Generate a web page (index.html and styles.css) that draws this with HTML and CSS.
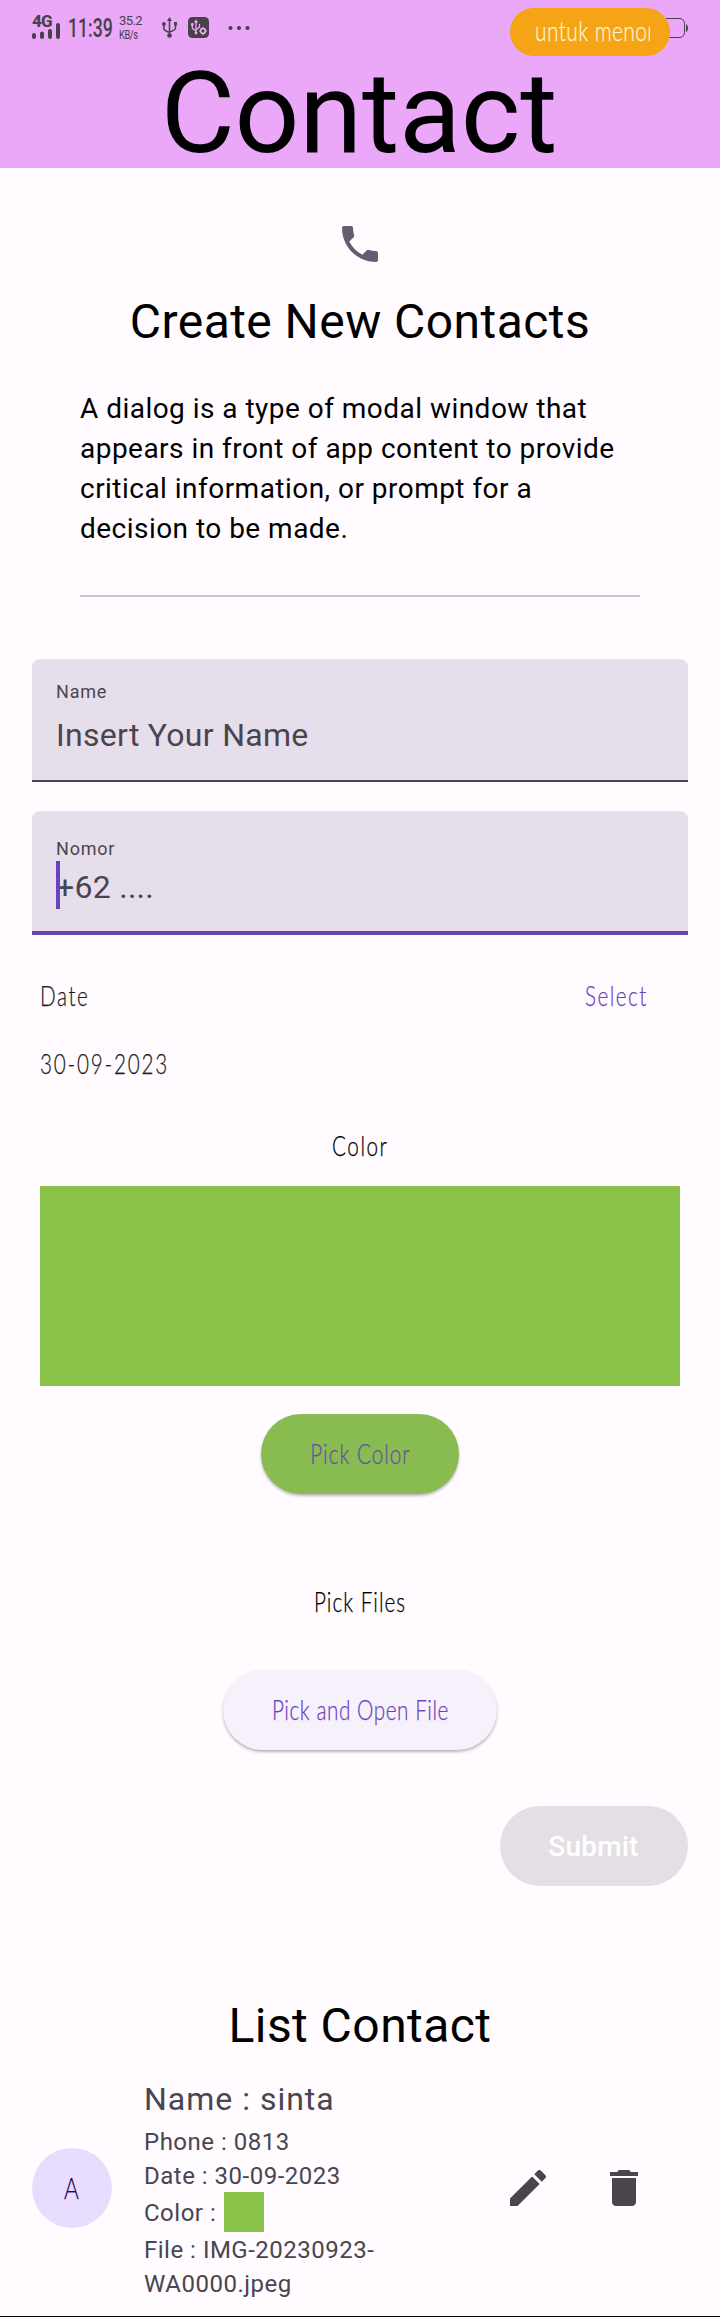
FILE: index.html
```html
<!DOCTYPE html>
<html lang="id">
<head>
<meta charset="utf-8">
<title>Contact</title>
<link rel="stylesheet" href="styles.css">
</head>
<body>
<header class="app-bar">
  <div class="status">
    <div class="signal">
      <span class="network">4G</span>
      <svg width="28" height="16" viewBox="0 0 28 16"><path d="M2 12v2M10 10.500v3.500M18 8v6M26 2v12" stroke="#48404a" stroke-width="4" stroke-linecap="round"/></svg>
    </div>
    <span class="clock"><span class="clock-text">11:39</span></span>
    <span class="speed"><span>35.2</span><span class="unit">KB/s</span></span>
    <svg class="usb" width="16" height="21" viewBox="0 0 16 21" fill="none" stroke="#48404a" stroke-width="1.500"><path d="M7.500 3v15M1.800 8v3q0 3 5.700 4.200M13.500 7v3.500q0 3-6 4.500"/><path d="M7.500 0L10 4H5zM12 5h3v3.500h-3z" fill="#48404a" stroke="none"/><circle cx="1.900" cy="7" r="1.900" fill="#48404a" stroke="none"/><circle cx="7.500" cy="18.500" r="2.300" fill="#48404a" stroke="none"/></svg>
    <svg class="debug" width="21" height="21" viewBox="0 0 21 21" fill="none" stroke="#efb4fa" stroke-width="1.200"><rect width="21" height="21" rx="4.500" fill="#48404a" stroke="none"/><path d="M8 4v12M4.300 8v2.500q0 2 3.700 3M11.500 7v3l-3 2.500"/><path d="M8 2.500L10 5.500H6z" fill="#efb4fa" stroke="none"/><circle cx="4.300" cy="7.500" r=".8" fill="#efb4fa"/><circle cx="8" cy="16" r=".8" fill="#efb4fa"/><circle cx="15" cy="14" r="2.400" stroke-width="1.500"/><path d="M15 10v1.500M15 16.500V18M11 14h1.500M17.500 14H19"/></svg>
    <svg class="dots" width="22" height="6" viewBox="0 0 22 6" fill="#48404a"><circle cx="2.500" cy="3" r="2.100"/><circle cx="11" cy="3" r="2.100"/><circle cx="19.500" cy="3" r="2.100"/></svg>
    <svg class="battery" width="40" height="20" viewBox="0 0 40 20"><rect x=".500" y=".500" width="36" height="19" rx="5" fill="none" stroke="#48404a"/><path d="M38 6q2 1 2 4t-2 4z" fill="#48404a"/></svg>
    <div class="toast"><div class="toast-clip"><span class="toast-text">untuk menon</span></div></div>
  </div>
  <h1 class="app-title">Contact</h1>
</header>
<main class="content">
  <svg class="phone" width="48" height="48" viewBox="0 0 24 24" fill="#655b73"><path d="M6.620 10.790c1.440 2.830 3.760 5.140 6.590 6.590l2.200-2.200c.270-.270.670-.360 1.020-.240 1.120.370 2.330.570 3.570.570.550 0 1 .450 1 1V20c0 .550-.450 1-1 1-9.390 0-17-7.610-17-17 0-.550.450-1 1-1h3.500c.550 0 1 .450 1 1 0 1.250.200 2.450.570 3.570.110.350.030.740-.250 1.020l-2.200 2.200z"/></svg>
  <h2 class="heading">Create New Contacts</h2>
  <p class="intro">A dialog is a type of modal window that appears in front of app content to provide critical information, or prompt for a decision to be made.</p>
  <div class="divider"></div>
  <div class="field">
    <div class="label">Name</div>
    <div class="placeholder">Insert Your Name</div>
  </div>
  <div class="field focused">
    <div class="label">Nomor</div>
    <div class="placeholder">+62 ....</div>
    <span class="caret"></span>
  </div>
  <div class="date-row"><span class="slim date-label">Date</span><span class="slim select">Select</span></div>
  <div class="date-value"><span class="slim digits">30-09-2023</span></div>
  <div class="color-label"><span class="slim centered color-text">Color</span></div>
  <div class="swatch"></div>
  <div class="button pick-color"><span class="slim centered pick-text">Pick Color</span></div>
  <div class="files-label"><span class="slim centered pick-text">Pick Files</span></div>
  <div class="button pick-file"><span class="slim centered open-text">Pick and Open File</span></div>
  <div class="button submit">Submit</div>
  <h2 class="heading list-heading">List Contact</h2>
  <section class="contact">
    <div class="avatar"><span class="slim centered initial">A</span></div>
    <div class="details">
      <div class="name">Name : sinta</div>
      <div class="line">Phone : 0813</div>
      <div class="line">Date : 30-09-2023</div>
      <div class="line color-line"><span class="color-key">Color :</span><span class="chip"></span></div>
      <div class="line file">File : IMG-20230923-<br>WA0000.jpeg</div>
    </div>
    <div class="actions">
      <svg width="48" height="48" viewBox="0 0 24 24" fill="#49454f"><path d="M3 17.250V21h3.750L17.810 9.940l-3.750-3.750L3 17.250zM20.710 7.040c.390-.390.390-1.020 0-1.410l-2.340-2.340c-.390-.390-1.020-.390-1.410 0l-1.830 1.830 3.750 3.750 1.830-1.830z"/></svg>
      <svg width="48" height="48" viewBox="0 0 24 24" fill="#49454f"><path d="M6 19c0 1.100.900 2 2 2h8c1.100 0 2-.900 2-2V7H6v12zM19 4h-3.500l-1-1h-5l-1 1H5v2h14V4z"/></svg>
    </div>
  </section>
</main>
<div class="bottom-line"></div>
</body>
</html>
```
FILE: styles.css
```css
* { box-sizing: border-box; }
body {
  margin: 0;
  width: 720px;
  background: #fffbff;
  color: #000;
  font-family: Roboto, "Liberation Sans", sans-serif;
}
h1, h2, p { margin: 0; font-weight: 400; }
svg { display: block; flex: none; }

.app-bar { height: 168px; background: #eba7f8; }
.status {
  position: relative;
  display: flex;
  align-items: flex-start;
  height: 57px;
  padding: 14px 32px 0;
  color: #48404a;
}
.signal { width: 28px; height: 26px; display: flex; flex-direction: column; }
.network { height: 9px; font-size: 17px; line-height: 14px; font-weight: 800; letter-spacing: -.8px; }
.clock { width: 43px; height: 28px; margin-left: 8px; }
.clock-text {
  display: inline-block;
  font-size: 26px;
  line-height: 28px;
  font-weight: 500;
  transform: scaleX(.68);
  transform-origin: left;
}
.speed {
  display: flex;
  flex-direction: column;
  width: 24px;
  margin-left: 8px;
  font-size: 13px;
  line-height: 14px;
  letter-spacing: -.6px;
}
.unit { transform: scaleX(.72); transform-origin: left; }
.usb { margin: 3px 0 0 19px; }
.debug { margin: 3px 0 0 10px; }
.dots { margin: 11px 0 0 19px; }
.battery { margin: 4px 0 0 auto; }
.toast {
  position: absolute;
  left: 510px;
  top: 8px;
  width: 160px;
  height: 48px;
  padding: 0 20px 0 25px;
  border-radius: 24px;
  background: #f4a414;
  color: #fff6d8;
}
.toast-clip { width: 115px; height: 48px; overflow: hidden; }
.toast-text {
  display: inline-block;
  white-space: nowrap;
  font: 300 28px/44px Lato, sans-serif;
  letter-spacing: .5px;
  -webkit-text-stroke: .25px;
  transform: scaleX(.75);
  transform-origin: left;
}
.app-title { text-align: center; font-size: 114px; line-height: 112px; letter-spacing: -.25px; margin-left: -2px; }

.content { display: flex; flex-direction: column; padding: 0 32px; }
.phone { margin: 52px auto 0; }
.heading { margin-top: 26px; text-align: center; font-size: 48px; line-height: 56px; letter-spacing: .45px; }
.intro { margin: 39px 48px 0; font-size: 28px; line-height: 40px; letter-spacing: .47px; }
.divider { height: 2px; margin: 46px 48px 62px; background: #cac5cb; }

.field {
  position: relative;
  height: 123px;
  padding: 21px 24px 0;
  border-radius: 8px 8px 0 0;
  border-bottom: 2px solid #49454f;
  background: #e6dfeb;
  color: #49454f;
}
.label { font-size: 18px; line-height: 24px; letter-spacing: .8px; }
.placeholder { margin-top: 11px; font-size: 32px; line-height: 40px; letter-spacing: .28px; }
.focused { height: 124px; margin-top: 29px; padding-top: 26px; border-bottom: 4px solid #6a47b0; }
.focused .placeholder { margin-top: 6px; }
.caret { position: absolute; left: 24px; top: 50px; width: 4px; height: 48px; background: #6b42bd; }

.slim {
  display: inline-block;
  white-space: nowrap;
  font: 300 26.5px/40px Lato, sans-serif;
  -webkit-text-stroke: .25px;
  transform: scaleX(.78);
  transform-origin: left;
}
.centered { transform-origin: center; }
.date-row { display: flex; justify-content: space-between; height: 40px; margin: 41px 24px 0 8px; color: #1c1b1f; }
.date-label { letter-spacing: 2px; }
.select { width: 79px; letter-spacing: 1.900px; color: #6b42bd; }
.date-value { height: 40px; margin: 28px 8px 0; color: #1c1b1f; }
.digits { letter-spacing: 2.300px; }
.color-label { height: 40px; margin-top: 42px; text-align: center; }
.color-text { letter-spacing: 2px; }
.swatch { height: 200px; margin: 20px 8px 28px; background: #8bc34a; }

.button {
  display: flex;
  align-items: center;
  justify-content: center;
  align-self: center;
  height: 80px;
  border-radius: 40px;
  color: #6b42bd;
  box-shadow: 0 2px 3px rgba(0, 0, 0, .28);
}
.pick-color { width: 198px; background: #88bb50; color: #6750a4; }
.pick-text { letter-spacing: 1.300px; }
.files-label { height: 40px; margin: 88px 0 48px; text-align: center; }
.pick-file { width: 274px; background: #f6f1fb; }
.open-text { letter-spacing: .72px; }
.submit {
  align-self: flex-end;
  width: 188px;
  margin-top: 56px;
  padding-right: 1px;
  background: #e3dfe4;
  color: #fff;
  font-size: 28px;
  font-weight: 500;
  letter-spacing: .2px;
  box-shadow: none;
}

.list-heading { margin-top: 112px; }
.contact { display: flex; align-items: center; height: 218px; margin-top: 25px; color: #49454f; }
.avatar {
  display: flex;
  align-items: center;
  justify-content: center;
  width: 80px;
  height: 80px;
  border-radius: 50%;
  background: #e9ddff;
  color: #22005d;
}
.initial { font-size: 29px; }
.details { align-self: flex-start; margin-left: 32px; width: 260px; }
.name { margin-bottom: 6px; font-size: 32px; line-height: 40px; letter-spacing: 1px; }
.line { font-size: 24px; line-height: 34px; letter-spacing: .5px; }
.color-line { display: flex; align-items: center; height: 40px; margin-top: -1px; }
.color-key { width: 80px; padding-top: 2px; }
.chip { width: 40px; height: 40px; background: #8bc34a; }
.file { margin-top: 1px; }
.actions { display: flex; gap: 48px; margin-left: 100px; }
.bottom-line { height: 1px; margin-top: 19px; background: #000; }
```
